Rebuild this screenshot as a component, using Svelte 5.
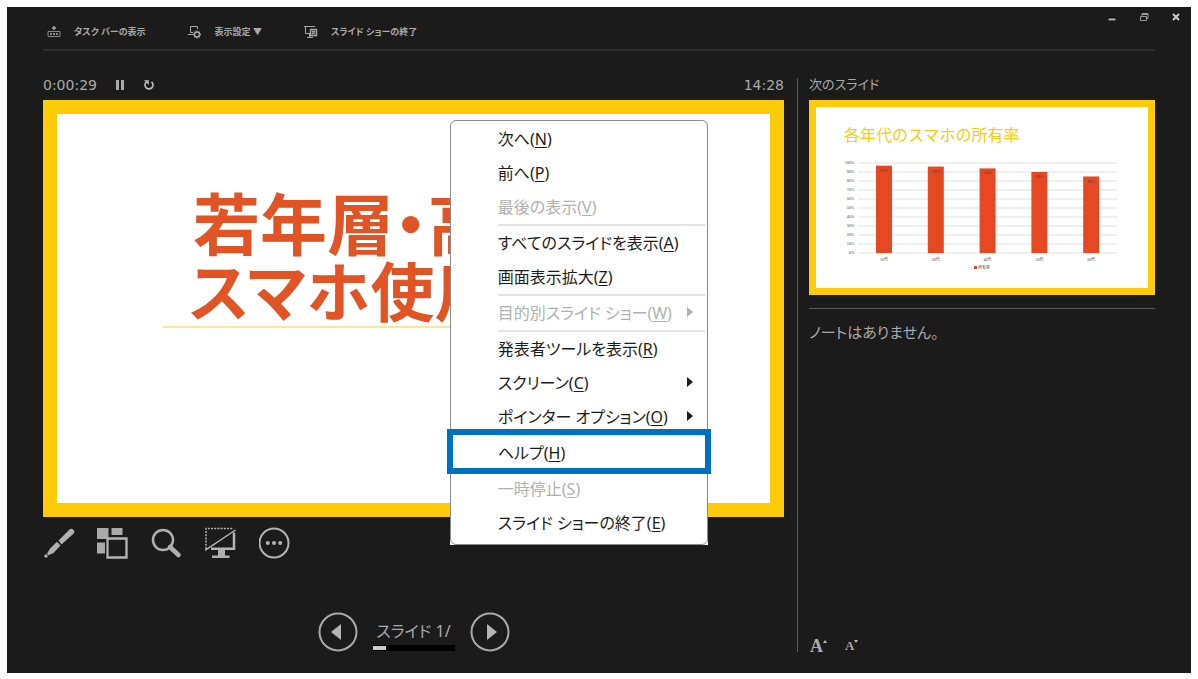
<script>
  let years = [
    { label: '20代', value: 97 },
    { label: '30代', value: 96 },
    { label: '40代', value: 94 },
    { label: '50代', value: 90 },
    { label: '60代', value: 85 }
  ];
  let ticks = [100, 90, 80, 70, 60, 50, 40, 30, 20, 10, 0];
  // groups are split by a separator line
  let menu = [
    [
      { text: '次へ', key: 'N' },
      { text: '前へ', key: 'P' },
      { text: '最後の表示', key: 'V', off: true }
    ],
    [
      { text: 'すべてのスライドを表示', key: 'A' },
      { text: '画面表示拡大', key: 'Z' }
    ],
    [{ text: '目的別スライド ショー', key: 'W', off: true, sub: true }],
    [
      { text: '発表者ツールを表示', key: 'R' },
      { text: 'スクリーン', key: 'C', sub: true },
      { text: 'ポインター オプション', key: 'O', sub: true }
    ],
    [{ text: 'ヘルプ', key: 'H', marked: true }],
    [
      { text: '一時停止', key: 'S', off: true },
      { text: 'スライド ショーの終了', key: 'E' }
    ]
  ];
</script>

<div class="page">
  <div class="window">
    <div class="controls">
      <button aria-label="最小化">
        <svg width="10" height="10" viewBox="0 0 10 10"><path d="M1.5 7.5h7" stroke="#bbb" stroke-width="1.8" /></svg>
      </button>
      <button aria-label="元に戻す">
        <svg width="10" height="10" viewBox="0 0 10 10" fill="none" stroke="#999"><path d="M1.5 4.500h6v4h-6zM3 4V1.500h6v5H7.500M3 2.500h6" /></svg>
      </button>
      <button aria-label="閉じる">
        <svg width="10" height="10" viewBox="0 0 10 10"><path d="M2 2l6 6M8 2l-6 6" stroke="#ccc" stroke-width="2" /></svg>
      </button>
    </div>

    <header>
      <button>
        <svg width="14" height="14" viewBox="0 0 14 14" fill="none" stroke="#aaa">
          <path d="M1 6.500h12v5H1z" stroke="#888" />
          <path d="M7 1v4M5 3h4" stroke-width="1.3" />
          <path d="M3 9h2M6 9h2M9 9h2" stroke-width="1.6" />
        </svg>
        タスク バーの表示
      </button>
      <button>
        <svg width="14" height="14" viewBox="0 0 14 14" fill="none" stroke="#aaa">
          <path d="M5 7.500H2.500v-6h7V4M0 9.500h5" />
          <circle cx="9" cy="9.500" r="2.500" stroke-width="1.4" />
          <path d="M9 5.500v1M9 12.500v1M5 9.500h1M12 9.500h1M6.200 6.700l.8.8M11 11.500l.8.8M11.800 6.700l-.8.8M7 11.500l-.8.8" stroke-width="1.3" />
        </svg>
        表示設定 ▼
      </button>
      <button>
        <svg width="14" height="14" viewBox="0 0 14 14" fill="none" stroke="#aaa">
          <path d="M0 1.500h11M1.500 2v6.500H6M5.500 9v4M3 12.500h6" />
          <path d="M6.500 4.500h6v6h-6zM8 6l3 3M11 6L8 9" stroke-width="1.4" />
        </svg>
        スライド ショーの終了
      </button>
    </header>

    <main>
      <section class="current">
        <div class="times">
          <span>0:00:29</span>
          <button aria-label="一時停止">
            <svg width="10" height="12" viewBox="0 0 10 12"><path d="M1 1h3v10H1zM6 1h3v10H6z" fill="#aaa" /></svg>
          </button>
          <button aria-label="タイマーを再開">
            <svg width="12" height="12" viewBox="0 0 12 12"><path d="M3.500 2.800A4 4 0 1 0 8.500 2.800" fill="none" stroke="#bbb" stroke-width="1.7" /><path d="M1 1.200h4.800V6z" fill="#bbb" /></svg>
          </button>
          <span class="clock">14:28</span>
        </div>

        <div class="stage">
          <div class="slide">
            <h1><span class="first">若年層・高</span><span>スマホ使用</span></h1>
          </div>
          <div class="menu-back">
            <ul class="menu">
              {#each menu as group}
                {#each group as item, i}
                  <li class:split={i === 0 && group !== menu[0]} class:marked={item.marked}>
                    <button disabled={item.off}>
                      <span>{item.text}(<u>{item.key}</u>)</span>
                      {#if item.sub}
                        <svg width="6" height="12" viewBox="0 0 6 12"><path d="M0 1l6 5-6 5z" fill="currentColor" /></svg>
                      {/if}
                    </button>
                  </li>
                {/each}
              {/each}
            </ul>
          </div>
        </div>

        <div class="tools">
          <button aria-label="ペン">
            <svg width="32" height="32" viewBox="0 0 32 32" fill="#b0b0b0">
              <path d="M15.500 13.500L26.500 2.400a3 3 0 0 1 4.200 4.200L18.500 17.500z" />
              <path d="M14 14.800l3.500 3.700-7 7.500-5 2.300-1.500-1.500 2.800-5z" />
              <circle cx="3" cy="29" r="1.7" />
            </svg>
          </button>
          <button aria-label="すべてのスライド">
            <svg width="32" height="32" viewBox="0 0 32 32">
              <path d="M0 1h11.500v11H0zM14.500 1h11v7h-11zM0 15.500h8v11H0z" fill="#aaa" />
              <path d="M10.500 11.500h19v19h-19z" fill="#1b1b1b" stroke="#b4b4b4" stroke-width="2.3" />
            </svg>
          </button>
          <button aria-label="拡大">
            <svg width="32" height="32" viewBox="0 0 32 32" fill="none" stroke="#b0b0b0">
              <circle cx="12" cy="13" r="10" stroke-width="2.5" />
              <path d="M19 20l8.500 8" stroke-width="4.5" stroke-linecap="round" />
            </svg>
          </button>
          <button aria-label="スクリーンを黒くする">
            <svg width="32" height="32" viewBox="0 0 32 32" fill="none" stroke="#b4b4b4">
              <path d="M1 22V1.500H28" stroke-width="1.5" stroke-dasharray="2 1.2" />
              <path d="M0 23.500L30.500 3" stroke-width="1.5" />
              <path d="M6 21.800h23V5.500" stroke-width="2.5" />
              <path d="M13 22h7v6.500h4.500V31H7v-2.500h6z" fill="#b0b0b0" stroke="none" />
            </svg>
          </button>
          <button aria-label="その他のオプション">
            <svg width="32" height="32" viewBox="0 0 32 32" fill="#b4b4b4">
              <circle cx="15" cy="16" r="14.5" fill="none" stroke="#b4b4b4" stroke-width="2" />
              <circle cx="8.8" cy="16" r="2" /><circle cx="15" cy="16" r="2" /><circle cx="21.200" cy="16" r="2" />
            </svg>
          </button>
        </div>

        <nav>
          <button aria-label="前のスライド">
            <svg width="40" height="40" viewBox="0 0 40 40"><circle cx="20" cy="20" r="18.5" fill="none" stroke="#aaa" stroke-width="2" /><path d="M13 20l10-8v16z" fill="#b4b4b4" /></svg>
          </button>
          <div class="count">
            <span>スライド 1/</span>
            <div class="bar"><i></i></div>
          </div>
          <button aria-label="次のスライド">
            <svg width="40" height="40" viewBox="0 0 40 40"><circle cx="20" cy="20" r="18.5" fill="none" stroke="#aaa" stroke-width="2" /><path d="M27 20l-10-8v16z" fill="#b4b4b4" /></svg>
          </button>
        </nav>
      </section>

      <aside>
        <h2>次のスライド</h2>
        <div class="slide next">
          <svg viewBox="0 0 332 181">
            <text x="28" y="34" class="title">各年代のスマホの所有率</text>
            {#each ticks as tick}
              <path d="M42 {146 - tick * 0.9}h259" stroke="#d9d9d9" stroke-width="0.8" />
              <text x="38" y={147 - tick * 0.9} text-anchor="end">{tick}%</text>
            {/each}
            {#each years as year, i}
              <rect x={60 + i * 51.8} y={146 - year.value * 0.9} width="16" height={year.value * 0.9} fill="#e64823" />
              <text x={68 + i * 51.8} y={152 - year.value * 0.9} text-anchor="middle">{year.value}%</text>
              <text x={68 + i * 51.8} y="154" text-anchor="middle">{year.label}</text>
            {/each}
            <rect x="158" y="159" width="3" height="3" fill="#e64823" />
            <text x="162" y="162">所有率</text>
          </svg>
        </div>
        <p>ノートはありません。</p>
        <div class="sizes">
          <button class="bigger" aria-label="文字を大きく">A<svg width="4" height="3" viewBox="0 0 4 3"><path d="M0 3h4L2 0z" fill="#bbb" /></svg></button>
          <button class="smaller" aria-label="文字を小さく">A<svg width="4" height="3" viewBox="0 0 4 3"><path d="M0 0h4L2 3z" fill="#bbb" /></svg></button>
        </div>
      </aside>
    </main>
  </div>
</div>

<style>
  .page {
    box-sizing: border-box;
    min-height: 100vh;
    display: flex;
    padding: 7px 7px 6px;
    background: #fff;
    color: #aaa;
    font-family: 'Noto Sans', 'Noto Sans CJK JP', sans-serif;
    font-feature-settings: 'palt';
  }
  .window {
    flex: 1;
    display: flex;
    flex-direction: column;
    background: #1b1b1b;
  }
  button {
    padding: 0;
    border: 0;
    background: none;
    color: inherit;
    font: inherit;
    font-feature-settings: inherit;
  }
  svg {
    display: block;
  }
  .controls {
    display: flex;
    justify-content: flex-end;
    gap: 22px;
    height: 10px;
    padding: 5px 10px 0;
  }
  header {
    display: flex;
    gap: 42px;
    margin: 0 36px;
    padding: 1px 4px 8px;
    border-bottom: 2px solid #2c2c2c;
    font-size: 9px;
    font-weight: bold;
    line-height: 18px;
  }
  header button {
    display: flex;
    align-items: center;
    gap: 13px;
  }
  main {
    flex: 1;
    display: grid;
    grid-template-columns: 754fr 358fr;
    padding: 27px 36px 21px;
  }
  .current {
    display: flex;
    flex-direction: column;
    padding-right: 13px;
  }
  .times {
    display: flex;
    align-items: center;
    gap: 18px;
    height: 14px;
    margin-bottom: 8px;
    font-family: 'DejaVu Sans', sans-serif;
    font-size: 14px;
  }
  .clock {
    margin-left: auto;
  }
  .stage {
    position: relative;
  }
  .slide {
    box-sizing: border-box;
    aspect-ratio: 16 / 9;
    border: 14px solid #ffca08;
    background: #fff;
    overflow: hidden;
  }
  h1 {
    margin: 76px 106px 0;
    padding-left: 26px;
    border-bottom: 2px solid #ffe78f;
    color: #e05426;
    font-size: 64px;
    line-height: 68px;
    white-space: nowrap;
  }
  h1 span {
    display: block;
  }
  .first {
    padding-left: 4px;
    font-size: 67px;
  }
  .menu-back {
    position: absolute;
    top: 20px;
    left: 54.9%;
    width: 258px;
    background: #fff;
  }
  .menu {
    margin: 0;
    padding: 1px 0 4px;
    border: 1px solid #8a8a8a;
    border-radius: 6px;
    list-style: none;
    color: #1c1c1c;
    font-size: 16px;
  }
  li {
    position: relative;
    padding: 0 2px 0 47px;
  }
  li button {
    display: flex;
    align-items: center;
    justify-content: space-between;
    width: 100%;
    height: 34px;
    padding: 0 12px 2px 0;
    white-space: nowrap;
  }
  li button:disabled {
    color: #b0b0b0;
  }
  .split button {
    height: 36px;
    border-top: 2px solid #e4e4e4;
  }
  u {
    text-underline-offset: 2px;
  }
  .marked::after {
    content: '';
    position: absolute;
    inset: -5px -4px -4px;
    border: 6px solid #0070c0;
    z-index: 1;
    pointer-events: none;
  }
  .tools {
    display: flex;
    gap: 22px;
    margin: 10px 0 20px;
  }
  nav {
    display: flex;
    justify-content: center;
    gap: 15px;
    margin-top: auto;
  }
  .count {
    display: flex;
    flex-direction: column;
    justify-content: flex-end;
    width: 82px;
    font-size: 16px;
    line-height: 24px;
    text-align: center;
  }
  .bar {
    height: 6px;
    margin: 2px 0 1px;
    background: #000;
  }
  .bar i {
    display: block;
    width: 16%;
    height: 4px;
    border: solid #000;
    border-width: 1px 0;
    background: #ccc;
  }
  aside {
    display: flex;
    flex-direction: column;
    padding-left: 11px;
    border-left: 1px solid #5a5a5a;
  }
  h2 {
    margin: 0 0 10px;
    font-size: 13px;
    font-weight: normal;
    line-height: 12px;
  }
  .next {
    border-width: 7px;
  }
  .next text {
    fill: #444;
    font-family: 'Liberation Serif', 'Noto Sans CJK JP', serif;
    font-size: 4px;
  }
  .next .title {
    fill: #ffca08;
    font-family: 'Noto Sans CJK JP', sans-serif;
    font-size: 16px;
    font-feature-settings: normal;
  }
  p {
    margin: 13px 0;
    padding-top: 11px;
    border-top: 1px solid #5a5a5a;
    font-size: 15px;
    line-height: 24px;
  }
  .sizes {
    display: flex;
    align-items: flex-end;
    gap: 18px;
    margin-top: auto;
    padding-left: 1px;
    font-family: 'Liberation Serif', serif;
    font-weight: bold;
  }
  .sizes button {
    display: flex;
    line-height: 12px;
  }
  .bigger {
    font-size: 18px;
  }
  .smaller {
    font-size: 13px;
  }
</style>
